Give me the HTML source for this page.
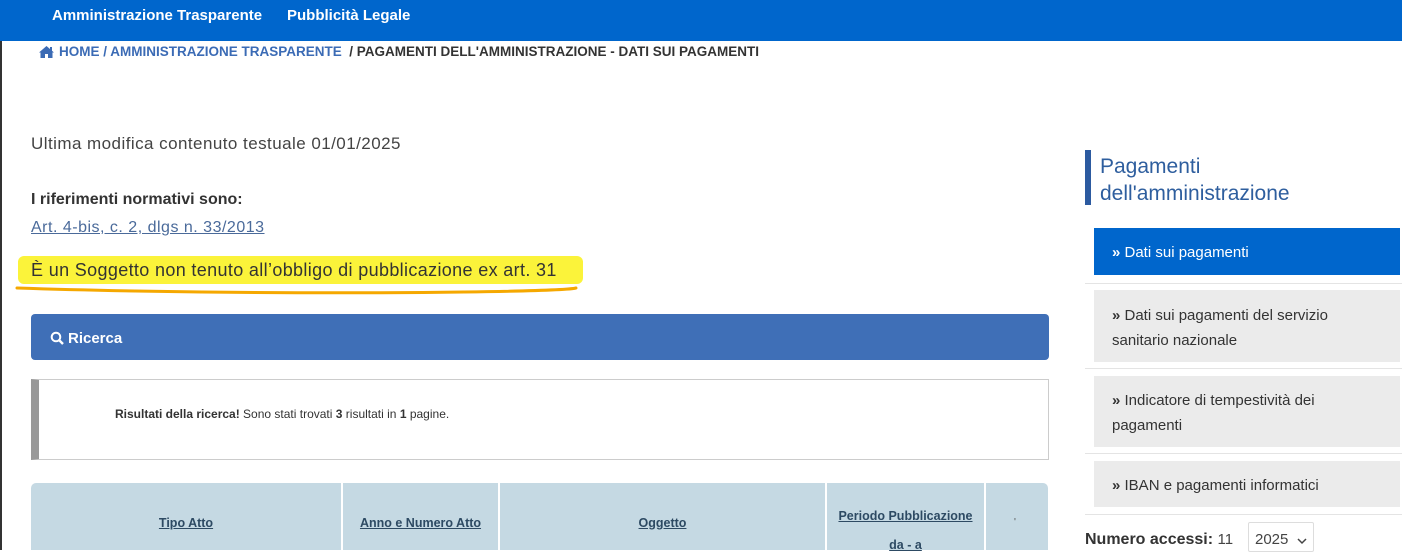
<!DOCTYPE html>
<html><head><meta charset="utf-8"><style>
*{margin:0;padding:0;box-sizing:border-box}
body{width:1402px;height:550px;overflow:hidden;background:#fff;font-family:"Liberation Sans",sans-serif;position:relative;color:#333}
.a{position:absolute;white-space:nowrap}
.n{font-family:"Liberation Sans Narrow","Liberation Sans",sans-serif}
</style></head><body>
<div class="a" style="left:0;top:0;width:1402px;height:41px;background:#0066cc"></div>
<div class="a n" style="left:52px;top:7px;color:#fff;font-weight:bold;font-size:15px">Amministrazione Trasparente</div>
<div class="a n" style="left:287px;top:7px;color:#fff;font-weight:bold;font-size:15px">Pubblicità Legale</div>
<div class="a" style="left:0;top:41px;width:2px;height:509px;background:#333"></div>
<svg class="a" style="left:38px;top:45px" width="17" height="14" viewBox="0 0 17 14"><path d="M8.5 1 L1 7.5 L2.5 7.5 L2.5 13 L7 13 L7 9 L10 9 L10 13 L14.5 13 L14.5 7.5 L16 7.5 Z" fill="#3b6bb5"/><rect x="12" y="2" width="2" height="4" fill="#3b6bb5"/></svg>
<div class="a n" style="left:59px;top:44px;font-size:13.5px;font-weight:bold;color:#3b6bb5">HOME / AMMINISTRAZIONE TRASPARENTE <span style="color:#333">&nbsp;/ PAGAMENTI DELL'AMMINISTRAZIONE - DATI SUI PAGAMENTI</span></div>
<div class="a" style="left:31px;top:134px;font-size:17px;color:#444;letter-spacing:0.45px">Ultima modifica contenuto testuale 01/01/2025</div>
<div class="a" style="left:31px;top:191px;font-size:16px;font-weight:bold;color:#333">I riferimenti normativi sono:</div>
<div class="a" style="left:31px;top:219px;font-size:16px;color:#4a6a9a;text-decoration:underline;letter-spacing:0.5px">Art. 4-bis, c. 2, dlgs n. 33/2013</div>
<div class="a" style="left:18px;top:256px;width:565px;height:28px;background:#fbf33a;border-radius:6px"></div>
<div class="a" style="left:31px;top:260px;font-size:18px;color:#333;letter-spacing:0.35px">È un Soggetto non tenuto all’obbligo di pubblicazione ex art. 31</div>
<svg class="a" style="left:14px;top:284px" width="570" height="14"><path d="M3 4 C120 8 300 10 450 8 C520 7 555 6 562 4" stroke="#f5a800" stroke-width="3" fill="none" stroke-linecap="round"/></svg>
<div class="a" style="left:31px;top:314px;width:1018px;height:46px;background:#3f6fb7;border-radius:4px"></div>
<svg class="a" style="left:50px;top:331px" width="14" height="14"><circle cx="6" cy="6" r="4.3" stroke="#fff" stroke-width="2" fill="none"/><path d="M9 9 L13 13" stroke="#fff" stroke-width="2.4"/></svg>
<div class="a n" style="left:68px;top:330px;font-size:15px;font-weight:bold;color:#fff">Ricerca</div>
<div class="a" style="left:31px;top:379px;width:1018px;height:81px;border:1px solid #ccc;border-left:8px solid #999"></div>
<div class="a n" style="left:115px;top:407px;font-size:12px;color:#333"><b>Risultati della ricerca!</b> Sono stati trovati <b>3</b> risultati in <b>1</b> pagine.</div>
<div class="a" style="left:31px;top:483px;width:1017px;height:67px;background:#c5d9e3;border-radius:5px 5px 0 0"></div>
<div class="a" style="left:341px;top:483px;width:2px;height:67px;background:#fff"></div>
<div class="a" style="left:498px;top:483px;width:2px;height:67px;background:#fff"></div>
<div class="a" style="left:825px;top:483px;width:2px;height:67px;background:#fff"></div>
<div class="a" style="left:984px;top:483px;width:2px;height:67px;background:#fff"></div>
<div class="a n" style="left:31px;top:516px;width:310px;text-align:center;font-size:12.5px;font-weight:bold;color:#2d4a63;text-decoration:underline">Tipo Atto</div>
<div class="a n" style="left:343px;top:516px;width:155px;text-align:center;font-size:12.5px;font-weight:bold;color:#2d4a63;text-decoration:underline">Anno e Numero Atto</div>
<div class="a n" style="left:500px;top:516px;width:325px;text-align:center;font-size:12.5px;font-weight:bold;color:#2d4a63;text-decoration:underline">Oggetto</div>
<div class="a n" style="left:827px;top:502px;width:157px;text-align:center;font-size:12.5px;font-weight:bold;color:#2d4a63;text-decoration:underline;line-height:29px">Periodo Pubblicazione<br>da - a</div>
<div class="a" style="left:1014px;top:517px;font-size:10px;color:#555">'</div>

<div class="a" style="left:1085px;top:150px;width:6px;height:55px;background:#2c5aa0"></div>
<div class="a" style="left:1100px;top:153px;font-size:21px;line-height:27px;color:#2e5e9e">Pagamenti<br>dell'amministrazione</div>
<div class="a" style="left:1094px;top:228px;width:306px;height:47px;background:#0066cc"></div>
<div class="a" style="left:1112px;top:244px;font-size:15px;color:#fff"><b>»</b> Dati sui pagamenti</div>
<div class="a" style="left:1085px;top:283px;width:317px;height:1px;background:#e4e4e4"></div>
<div class="a" style="left:1094px;top:290px;width:306px;height:72px;background:#ebebeb"></div>
<div class="a" style="left:1112px;top:303px;font-size:15px;line-height:25px;color:#333"><b>»</b> Dati sui pagamenti del servizio<br>sanitario nazionale</div>
<div class="a" style="left:1085px;top:368px;width:317px;height:1px;background:#e4e4e4"></div>
<div class="a" style="left:1094px;top:376px;width:306px;height:71px;background:#ebebeb"></div>
<div class="a" style="left:1112px;top:388px;font-size:15px;line-height:25px;color:#333"><b>»</b> Indicatore di tempestività dei<br>pagamenti</div>
<div class="a" style="left:1085px;top:453px;width:317px;height:1px;background:#e4e4e4"></div>
<div class="a" style="left:1094px;top:461px;width:306px;height:46px;background:#ebebeb"></div>
<div class="a" style="left:1112px;top:477px;font-size:15px;color:#333"><b>»</b> IBAN e pagamenti informatici</div>
<div class="a" style="left:1085px;top:514px;width:317px;height:1px;background:#e4e4e4"></div>
<div class="a" style="left:1085px;top:531px;font-size:16px;color:#333"><b>Numero accessi:</b> <span style="font-size:15px;color:#444">11</span></div>
<div class="a" style="left:1248px;top:522px;width:66px;height:30px;border:1px solid #ddd;border-radius:2px;background:#fff"></div>
<div class="a" style="left:1255px;top:531px;font-size:15px;color:#444">2025</div>
<svg class="a" style="left:1297px;top:538px" width="10" height="7"><path d="M1 1 L5 5 L9 1" stroke="#444" stroke-width="1.5" fill="none"/></svg>
</body></html>
